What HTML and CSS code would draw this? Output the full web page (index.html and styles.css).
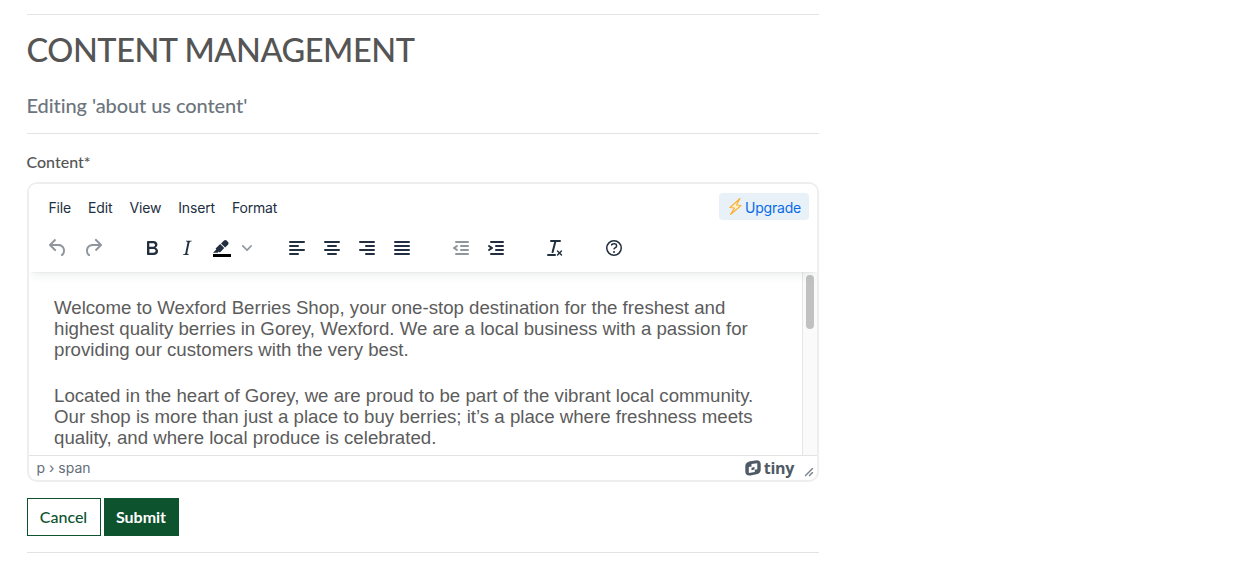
FILE: index.html
```
<!DOCTYPE html>
<html lang="en">
<head>
<meta charset="utf-8">
<title>Content Management</title>
<link rel="stylesheet" href="styles.css">
</head>
<body>
<main class="page">
  <header class="heading">
    <h1>CONTENT MANAGEMENT</h1>
    <p class="subtitle">Editing 'about us content'</p>
  </header>
  <label class="label">Content*</label>
  <section class="editor">
    <div class="editor-header">
      <nav class="menubar">
        <span>File</span><span>Edit</span><span>View</span><span>Insert</span><span>Format</span>
        <a class="upgrade"><svg width="16" height="20" viewBox="0 0 16 20"><path d="M13 2.500 3 11.500 7.500 12 3.500 18.500 14 9.500 9.500 9z" fill="#fff3d0" stroke="#fbb03b" stroke-width="1.200" stroke-linejoin="round"/></svg><span class="upgrade-text">Upgrade</span></a>
      </nav>
      <div class="toolbar">
        <div class="group disabled">
          <button><svg width="24" height="24"><path d="M6.4 8H12c3.7 0 6.2 2 6.8 5.1.6 2.7-.4 5.6-2.3 6.8a1 1 0 0 1-1-1.8c1.1-.6 1.8-2.7 1.4-4.6-.5-2.1-2.1-3.5-4.9-3.5H6.4l3.3 3.3a1 1 0 1 1-1.4 1.4l-5-5a1 1 0 0 1 0-1.4l5-5a1 1 0 0 1 1.4 1.4L6.4 8Z"/></svg></button>
          <button><svg width="24" height="24"><path d="M17.6 10H12c-2.8 0-4.4 1.4-4.9 3.5-.4 2 .3 4 1.4 4.6a1 1 0 1 1-1 1.8c-2-1.2-2.9-4.1-2.3-6.8.6-3 3-5.1 6.8-5.1h5.6l-3.3-3.3a1 1 0 1 1 1.4-1.4l5 5a1 1 0 0 1 0 1.4l-5 5a1 1 0 0 1-1.4-1.4l3.3-3.3Z"/></svg></button>
        </div>
        <div class="group">
          <button><svg width="24" height="24"><path fill-rule="evenodd" d="M7.8 19c-.3 0-.5 0-.6-.2l-.2-.5V5.7c0-.2 0-.4.2-.5l.6-.2h5c1.5 0 2.7.3 3.5 1 .7.6 1.1 1.4 1.1 2.5a3 3 0 0 1-.6 1.9c-.4.6-1 1-1.6 1.2.4.1.9.3 1.3.6s.8.7 1 1.2c.4.4.5 1 .5 1.6 0 1.3-.4 2.3-1.3 3-.8.7-2.1 1-3.8 1H7.8Zm5-8.3c.6 0 1.2-.1 1.6-.5.4-.3.6-.7.6-1.3 0-1.1-.8-1.7-2.3-1.7H9.3v3.5h3.4Zm.5 6c.7 0 1.3-.1 1.7-.4.4-.4.6-.9.6-1.5s-.2-1-.7-1.4c-.4-.3-1-.4-2-.4H9.4v3.8h4Z"/></svg></button>
          <button><svg width="24" height="24"><path d="m16.7 4.7-.1.9h-.3c-.6 0-1 0-1.4.3-.3.3-.4.6-.5 1.1l-2.1 9.8v.6c0 .5.4.8 1.4.8h.2l-.2.8H8l.2-.8h.2c1.1 0 1.8-.5 2-1.5l2-9.8.1-.5c0-.6-.4-.8-1.4-.8h-.3l.2-.9h5.8Z"/></svg></button>
          <div class="split">
            <button><svg width="24" height="24"><path d="M3 18h18v3H3z" fill="#000"/><path d="M7.7 16.7H3l3.3-3.3-.7-.8L10.2 8l4 4.1-4 4.2c-.2.2-.6.2-.8 0l-.6-.7-1.1 1.1zm5-7.5L11 7.4l3-2.9a2 2 0 0 1 2.6 0L18 6c.7.7.7 2 0 2.7l-2.9 2.9-1.8-1.8-.5-.6"/></svg></button>
            <button class="chevron"><svg width="10" height="10"><path d="M8.7 2.2c.3-.3.8-.3 1 0 .4.4.4.9 0 1.2L5.7 7.8c-.3.3-.9.3-1.2 0L.2 3.4a.8.8 0 0 1 0-1.2c.3-.3.8-.3 1.1 0L5 6l3.7-3.8Z"/></svg></button>
          </div>
        </div>
        <div class="group">
          <button><svg width="24" height="24"><path class="bars" d="M5 6h14M5 10h8M5 14h14M5 18h8"/></svg></button>
          <button><svg width="24" height="24"><path class="bars" d="M5 6h14M8 10h8M5 14h14M8 18h8"/></svg></button>
          <button><svg width="24" height="24"><path class="bars" d="M5 6h14M11 10h8M5 14h14M11 18h8"/></svg></button>
          <button><svg width="24" height="24"><path class="bars" d="M5 6h14M5 10h14M5 14h14M5 18h14"/></svg></button>
        </div>
        <div class="group">
          <button class="disabled"><svg width="24" height="24"><path class="bars" d="M7 6h12M12 10h7M12 14h7M7 18h12"/><path d="M8.6 13.2a1 1 0 0 1-1.2 1.6l-3-2a1 1 0 0 1 0-1.6l3-2a1 1 0 0 1 1.2 1.6L6.8 12l1.8 1.2z"/></svg></button>
          <button><svg width="24" height="24"><path class="bars" d="M7 6h12M12 10h7M12 14h7M7 18h12"/><path d="M4.4 13.2 6.2 12l-1.8-1.2a1 1 0 0 1 1.2-1.6l3 2a1 1 0 0 1 0 1.6l-3 2a1 1 0 1 1-1.2-1.6z"/></svg></button>
        </div>
        <div class="group">
          <button><svg width="24" height="24"><path d="M13.2 6a1 1 0 0 1 0 .2l-2.6 10a1 1 0 0 1-1 .8h-.2a.8.8 0 0 1-.8-1l2.6-10H8a1 1 0 1 1 0-2h9a1 1 0 0 1 0 2h-3.8ZM5 18h7a1 1 0 0 1 0 2H5a1 1 0 0 1 0-2Zm13 1.5L16.5 18 15 19.5a.7.7 0 0 1-1-1l1.5-1.5-1.5-1.5a.7.7 0 0 1 1-1l1.5 1.5 1.5-1.5a.7.7 0 0 1 1 1L17.5 17l1.5 1.5a.7.7 0 0 1-1 1Z"/></svg></button>
        </div>
        <div class="group">
          <button><svg width="24" height="24"><circle cx="12" cy="12" r="7.25" fill="none" stroke="#222f3e" stroke-width="1.5"/><path d="M9.6 9.7a.7.7 0 0 1-.7-.8c0-1.1 1.5-1.8 3.2-1.8 1.8 0 3.2.8 3.2 2.4 0 1.4-.4 2.1-1.5 2.8-.2 0-.3.1-.3.2a2 2 0 0 0-.8.8.8.8 0 0 1-1.4-.6c.3-.7.8-1 1.3-1.5l.4-.2c.7-.4.8-.6.8-1.5 0-.5-.6-.9-1.7-.9-.5 0-1 .1-1.4.3-.2 0-.3.1-.3.2v-.2c0 .4-.4.8-.8.8Z"/><circle cx="12" cy="16" r="1"/></svg></button>
        </div>
      </div>
    </div>
    <div class="editor-body">
      <div class="document">
        <p>Welcome to Wexford Berries Shop, your one-stop destination for the freshest and<br>highest quality berries in Gorey, Wexford. We are a local business with a passion for<br>providing our customers with the very best.</p>
        <p>Located in the heart of Gorey, we are proud to be part of the vibrant local community.<br>Our shop is more than just a place to buy berries; it’s a place where freshness meets<br>quality, and where local produce is celebrated.</p>
      </div>
      <div class="scrollbar"><div class="thumb"></div></div>
    </div>
    <footer class="statusbar">
      <span class="path">p › span</span>
      <span class="brand"><svg width="16" height="16" viewBox="0 0 16 16"><path fill-rule="evenodd" d="M5 1.300 10.500.4Q15.600-.1 15.700 4.500V10Q15.500 13.500 11.500 14.300L5.500 15.500Q.4 16 .3 11.500V6Q.5 2.200 5 1.300ZM6.500 4.100 12.300 3.200V9.200L9.800 9.700V11.900L3.800 13V7L6.500 6.500ZM6.500 7.700V10.200L9.500 9.600V7.100Z"/></svg><b>tiny</b></span>
      <svg class="resize" width="10" height="10"><path d="M8.1 1.100A.5.5 0 1 1 9 2l-7 7A.5.5 0 1 1 1 8l7-7ZM8.100 5.100A.5.5 0 1 1 9 6l-3 3A.5.5 0 1 1 5 8l3-3Z"/></svg>
    </footer>
  </section>
  <div class="actions">
    <button class="btn">Cancel</button>
    <button class="btn primary">Submit</button>
  </div>
</main>
</body>
</html>
```
FILE: styles.css
```
* { box-sizing: border-box; }
body { margin: 0; background: #fff; color: #555; font-family: Lato, sans-serif; font-variant-ligatures: no-common-ligatures; }
button { border: 0; padding: 0; background: none; }
.page { width: 792px; margin: 14px 0 0 27px; height: 539px; border-top: 1px solid #e3e3e3; border-bottom: 1px solid #e3e3e3; }
.heading { height: 119px; border-bottom: 1px solid #e3e3e3; padding-top: 15px; }
h1 { margin: 0 0 0 -.5px; font-size: 32.5px; line-height: 40px; font-weight: 500; white-space: nowrap; letter-spacing: -.45px; }
.subtitle { margin: 23px 0 0 -.5px; font-size: 20px; line-height: 24px; font-weight: 500; color: #6c757d; letter-spacing: -.08px; }
.label { display: block; margin: 16px 0 0 -.5px; height: 32px; font-size: 16px; line-height: 24px; font-weight: 500; }
.editor { height: 300px; border: 2px solid #eee; border-radius: 10px; overflow: hidden; display: flex; flex-direction: column; }
.editor-header { height: 88px; flex: none; position: relative; z-index: 1; background: #fff; box-shadow: 0 2px 2px -2px rgba(34,47,62,.1), 0 8px 8px -4px rgba(34,47,62,.07); }
.menubar { height: 47px; display: flex; align-items: center; gap: 17px; padding: 1px 8px 0 19.5px; font: 14px/20px Inter, sans-serif; letter-spacing: -.16px; color: #222f3e; }
.upgrade { margin-left: auto; margin-top: -4px; height: 27px; width: 90px; display: flex; align-items: center; padding-left: 8px; gap: 2px; background: #e8f1f8; border-radius: 4px; color: #086be6; letter-spacing: -.2px; }
.upgrade-text { padding-top: 3px; }
.toolbar { display: flex; gap: 25px; padding-left: 12px; height: 34px; }
.group { display: flex; gap: 1px; }
.group button { width: 34px; height: 34px; display: flex; align-items: center; justify-content: center; }
.group svg { fill: #222f3e; }
.split { display: flex; }
.group .chevron { width: 16px; opacity: .5; }
.disabled { opacity: .5; }
.bars { stroke: #222f3e; stroke-width: 2; stroke-linecap: round; }
.editor-body { flex: 1; display: flex; min-height: 0; }
.document { flex: 1; padding: 25px 0 0 25px; overflow: hidden; font-family: "Liberation Sans", sans-serif; font-size: 18.67px; line-height: 21px; color: #5c5c5c; white-space: nowrap; }
.document p { margin: 0 0 25px; }
.scrollbar { width: 15px; background: #fafafa; border-left: 1px solid #e6e6e6; padding: 3px 0 0 3px; }
.thumb { width: 8px; height: 54px; border-radius: 4px; background: #c1c1c1; }
.statusbar { height: 25px; flex: none; border-top: 1px solid #e3e3e3; display: flex; align-items: center; padding: 0 3px 0 7.5px; font: 14px/20px Inter, sans-serif; color: #646d78; }
.brand { margin-left: auto; display: flex; align-items: center; gap: 3px; color: #4e5a66; }
.brand svg { fill: #4e5a66; }
.brand b { font: 700 16px/20px "Open Sans", sans-serif; letter-spacing: -.3px; }
.resize { margin: 7px 0 0 10px; fill: #7a828b; }
.actions { display: flex; gap: 3px; margin-top: 16px; }
.btn { height: 38px; width: 74px; padding-right: 1px; border: 1px solid #0d532e; color: #0d532e; font: 500 16px/24px Lato, sans-serif; }
.primary { width: 75px; background: #0d532e; color: #fff; font-weight: 700; }
```
